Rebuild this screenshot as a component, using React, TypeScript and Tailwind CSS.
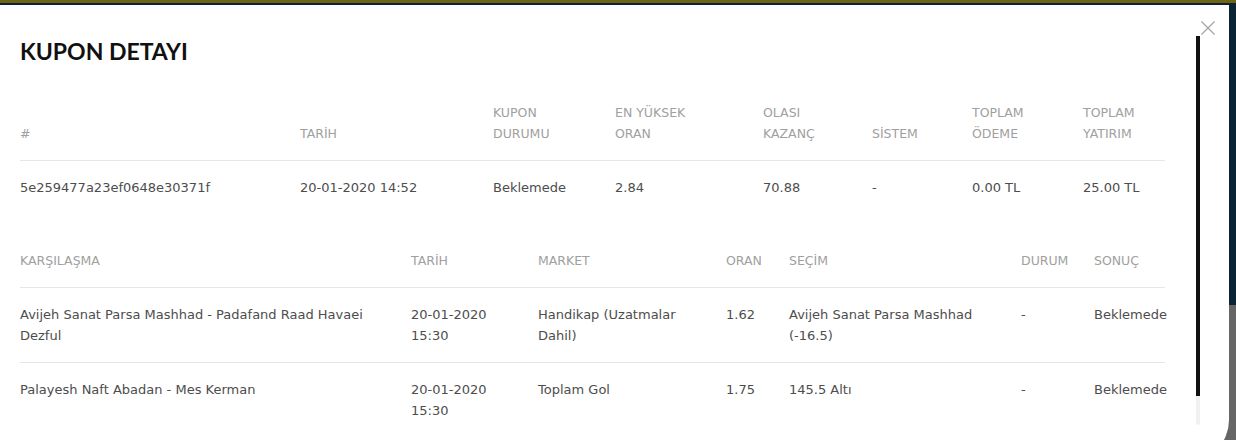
const summaryCols = [
  { label: ["#"], width: "w-[280px]" },
  { label: ["TARİH"], width: "w-[193px]" },
  { label: ["KUPON", "DURUMU"], width: "w-[122px]" },
  { label: ["EN YÜKSEK", "ORAN"], width: "w-[148px]" },
  { label: ["OLASI", "KAZANÇ"], width: "w-[109px]" },
  { label: ["SİSTEM"], width: "w-[100px]" },
  { label: ["TOPLAM", "ÖDEME"], width: "w-[111px]" },
  { label: ["TOPLAM", "YATIRIM"], width: "w-[82px]" },
];

const summaryRow = [
  "5e259477a23ef0648e30371f",
  "20-01-2020 14:52",
  "Beklemede",
  "2.84",
  "70.88",
  "-",
  "0.00 TL",
  "25.00 TL",
];

const matchCols = [
  { label: "KARŞILAŞMA", width: "w-[391px]" },
  { label: "TARİH", width: "w-[127px]" },
  { label: "MARKET", width: "w-[188px]" },
  { label: "ORAN", width: "w-[63px]" },
  { label: "SEÇİM", width: "w-[232px]" },
  { label: "DURUM", width: "w-[73px]" },
  { label: "SONUÇ", width: "w-[71px]" },
];

const matches = [
  [
    "Avijeh Sanat Parsa Mashhad - Padafand Raad Havaei Dezful",
    "20-01-2020 15:30",
    "Handikap (Uzatmalar Dahil)",
    "1.62",
    "Avijeh Sanat Parsa Mashhad (-16.5)",
    "-",
    "Beklemede",
  ],
  [
    "Palayesh Naft Abadan - Mes Kerman",
    "20-01-2020 15:30",
    "Toplam Gol",
    "1.75",
    "145.5 Altı",
    "-",
    "Beklemede",
  ],
];

export default function App() {
  return (
    <div className="relative h-[440px] w-[1236px] overflow-hidden flex flex-col font-['DejaVu_Sans',sans-serif]">
      {/* page behind the modal */}
      <div className="h-[3px] bg-[#6e6414]" />
      <div className="h-[302px] bg-[#0b2435]" />
      <div className="flex-1 bg-[#666666]" />

      {/* modal */}
      <div className="absolute left-0 top-[5px] w-[1229px] h-[457px] bg-white rounded-br-[42px] flex">
        <button className="absolute top-[16px] right-[14px]">
          <svg width="14" height="14" viewBox="0 0 14 14" fill="none" stroke="#a3a3a3" strokeWidth="1.2">
            <path d="M0.5 0.5L13.5 13.5M13.5 0.5L0.5 13.5" />
          </svg>
        </button>

        <div className="w-[1165px] pl-[20px] pt-[33px] shrink-0">
          <h2 className="text-[23px] leading-[26px] font-bold text-[#111] font-['Lato',sans-serif]">KUPON DETAYI</h2>

          <table className="mt-[22px] w-full table-fixed border-collapse text-[13px] leading-[21px]">
            <thead>
              <tr className="border-b border-[#e6e6e6]">
                {summaryCols.map((c, i) => (
                  <th key={i} className={`${c.width} py-[16px] pr-[16px] text-left font-normal align-bottom text-[#a0a0a0] text-[12.5px]`}>
                    {c.label.map((l, j) => (
                      <div key={j}>{l}</div>
                    ))}
                  </th>
                ))}
              </tr>
            </thead>
            <tbody>
              <tr>
                {summaryRow.map((v, i) => (
                  <td key={i} className="py-[16px] pr-[16px] align-top text-[#4d4d4d]">
                    {v}
                  </td>
                ))}
              </tr>
            </tbody>
          </table>

          <table className="mt-[20px] w-full table-fixed border-collapse text-[13px] leading-[21px]">
            <thead>
              <tr className="border-b border-[#e6e6e6]">
                {matchCols.map((c, i) => (
                  <th key={i} className={`${c.width} py-[16px] pr-[16px] text-left font-normal align-bottom text-[#a0a0a0] text-[12.5px]`}>
                    {c.label}
                  </th>
                ))}
              </tr>
            </thead>
            <tbody>
              {matches.map((row, r) => (
                <tr key={r} className={r < matches.length - 1 ? "border-b border-[#e6e6e6]" : ""}>
                  {row.map((v, i) => (
                    <td key={i} className="py-[16px] pr-[16px] align-top text-[#4d4d4d] last:pr-0">
                      {v}
                    </td>
                  ))}
                </tr>
              ))}
            </tbody>
          </table>
        </div>

        {/* scrollbar */}
        <div className="ml-[31px] mt-[31px] w-[4px] h-[389px] flex flex-col rounded-b-full bg-[#f1f1f1]">
          <div className="h-[360px] bg-[#111111]" />
        </div>
      </div>
    </div>
  );
}
